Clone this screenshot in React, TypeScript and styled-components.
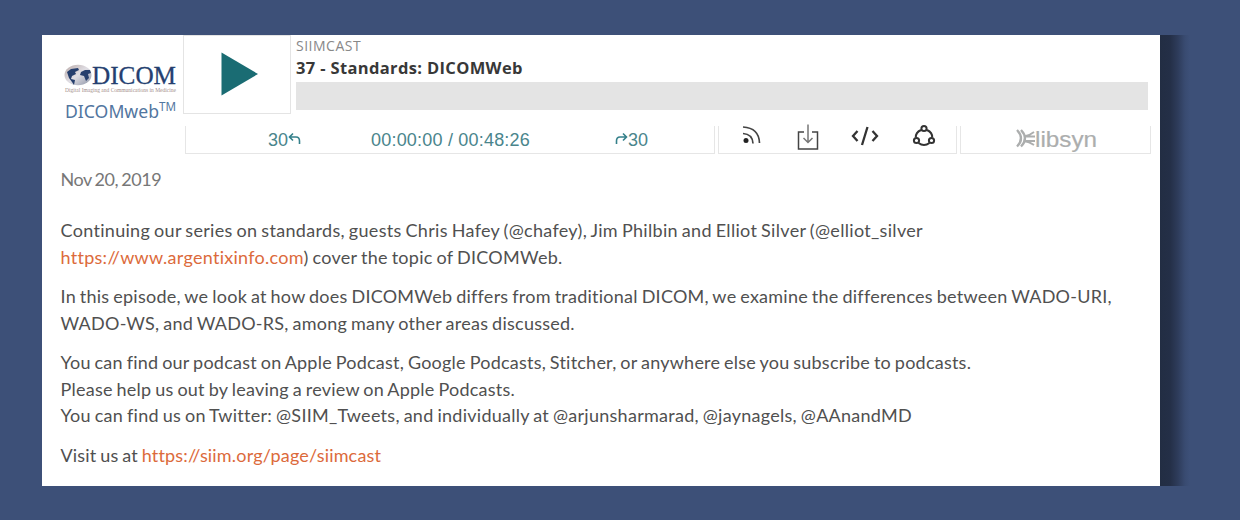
import React from "react";
import styled, { createGlobalStyle } from "styled-components";

interface ITextProps {
  $spacing?: number;
}

interface IPanelProps {
  $width: number;
}

const App: React.FC = () => {
  return (
    <Page>
      <GlobalStyle />
      <Card>
        <Player>
          <Logo />
          <Main>
            <Top>
              <PlayButton aria-label='Play'>
                <svg width='38' height='44' viewBox='0 0 38 44'>
                  <path d='M0.5 0.5L37 22L0.5 43.5Z' fill='#1a6c73' />
                </svg>
              </PlayButton>
              <Info>
                <Show>SIIMCAST</Show>
                <Title>37 - Standards: DICOMWeb</Title>
                <Track />
              </Info>
            </Top>
            <Bottom>
              <Times $width={530}>
                <Skip>
                  30
                  <SkipIcon />
                </Skip>
                <Clock>00:00:00 / 00:48:26</Clock>
                <Skip>
                  <SkipIcon flipped />
                  30
                </Skip>
              </Times>
              <Actions $width={239}>
                <RssIcon />
                <DownloadIcon />
                <EmbedIcon />
                <ShareIcon />
              </Actions>
              <Brand $width={191}>
                <Libsyn />
              </Brand>
            </Bottom>
          </Main>
        </Player>
        <Notes>
          <PostDate>Nov 20, 2019</PostDate>
          <Paragraph>
            <Line $spacing={0.31}>
              Continuing our series on standards, guests Chris Hafey (@chafey), Jim Philbin and Elliot Silver (@elliot_silver
            </Line>
            <Line $spacing={0.28}>
              <Link href='#'>https://www.argentixinfo.com</Link>) cover the topic of DICOMWeb.
            </Line>
          </Paragraph>
          <Paragraph>
            <Line $spacing={0.25}>
              In this episode, we look at how does DICOMWeb differs from traditional DICOM, we examine the differences between WADO-URI,
            </Line>
            <Line $spacing={0.25}>WADO-WS, and WADO-RS, among many other areas discussed.</Line>
          </Paragraph>
          <Paragraph>
            <Line $spacing={0.23}>
              You can find our podcast on Apple Podcast, Google Podcasts, Stitcher, or anywhere else you subscribe to podcasts.
            </Line>
            <Line $spacing={0.24}>Please help us out by leaving a review on Apple Podcasts.</Line>
            <Line $spacing={0.27}>
              You can find us on Twitter: @SIIM_Tweets, and individually at @arjunsharmarad, @jaynagels, @AAnandMD
            </Line>
          </Paragraph>
          <Paragraph>
            <Line $spacing={0.18}>
              Visit us at <Link href='#'>https://siim.org/page/siimcast</Link>
            </Line>
          </Paragraph>
        </Notes>
      </Card>
      <Shade />
    </Page>
  );
};

const Logo: React.FC = () => (
  <LogoBox>
    <svg width='118' height='60' viewBox='0 0 118 60'>
      <defs>
        <linearGradient id='globe' x1='0' y1='0' x2='1' y2='1'>
          <stop offset='0' stopColor='#b9aaa8' />
          <stop offset='0.5' stopColor='#e0dee4' />
          <stop offset='1' stopColor='#8b93a6' />
        </linearGradient>
      </defs>
      <ellipse cx='16' cy='11' rx='13.5' ry='10.2' fill='url(#globe)' />
      <path d='M5 8l4-3 7-1 1 2-4 2 1 2-4 2-1 3 4 1-1 5-2-3-3-4zM19 8l4-2 5 0 1 3-3 1 1 4-3 3-2-5-4-1z' fill='#263f6d' />
      <text x='30' y='20.3' fontFamily='Liberation Serif, serif' fontSize='25.5' fill='#253f70' stroke='#253f70' strokeWidth='0.3' textLength='84' lengthAdjust='spacingAndGlyphs'>
        DICOM
      </text>
      <text x='3' y='28.3' fontFamily='Liberation Serif, serif' fontSize='5.5' fill='#a58f8d' textLength='111' lengthAdjust='spacingAndGlyphs'>
        Digital Imaging and Communications in Medicine
      </text>
      <text x='3' y='54' fontFamily='Noto Sans, sans-serif' fontSize='18.5' fill='#5276a0' textLength='94' lengthAdjust='spacingAndGlyphs'>
        DICOMweb
      </text>
      <text x='97' y='47' fontFamily='Noto Sans, sans-serif' fontSize='12' fill='#5276a0' textLength='17' lengthAdjust='spacingAndGlyphs'>
        TM
      </text>
    </svg>
  </LogoBox>
);

const SkipIcon: React.FC<{ flipped?: boolean }> = ({ flipped }) => (
  <svg width='13' height='14' viewBox='0 0 13 14' fill='none' stroke='#35808a' strokeWidth='1.6'>
    <path d={flipped ? "M1.5 12V9Q1.5 5 5 5H11M8 1.5L11.5 5L8 8.5" : "M11.5 12V9Q11.5 5 8 5H2M5 1.5L1.5 5L5 8.5"} />
  </svg>
);

const RssIcon: React.FC = () => (
  <svg width='20' height='20' viewBox='0 0 20 20' fill='none' stroke='#444' strokeWidth='1.7'>
    <circle cx='4' cy='14.5' r='2.5' fill='#222' stroke='none' />
    <path d='M1 7.5Q10.5 8 11 17.5M1 1Q17 2 17.5 17' />
  </svg>
);

const DownloadIcon: React.FC = () => (
  <svg width='22' height='28' viewBox='0 0 22 28' fill='none' strokeWidth='1.5'>
    <path d='M7 9H1.5V26H20.5V9H15' stroke='#444' />
    <path d='M11 1.5V19.5M6.5 15L11 19.5L15.5 15' stroke='#777' />
  </svg>
);

const EmbedIcon: React.FC = () => (
  <svg width='28' height='20' viewBox='0 0 28 20' fill='none' stroke='#333' strokeWidth='2.3'>
    <path d='M6.5 5L2 10L6.5 15M21.5 5L26 10L21.5 15M16.5 1L11 19' />
  </svg>
);

const ShareIcon: React.FC = () => (
  <svg width='24' height='24' viewBox='0 0 24 24' fill='none' stroke='#333' strokeWidth='2'>
    <circle cx='12' cy='4.5' r='2.6' />
    <circle cx='4.5' cy='16.5' r='2.6' />
    <circle cx='19.5' cy='16.5' r='2.6' />
    <path d='M9 6Q3.5 8.5 3.8 13.5M15 6Q20.5 8.5 20.2 13.5M6.5 19Q12 23 17.5 19' />
  </svg>
);

const Libsyn: React.FC = () => (
  <svg width='84' height='28' viewBox='0 0 84 28'>
    <g fill='none' stroke='#acaeae' strokeWidth='2.3'>
      <path d='M1 3Q9 11.5 1 19.5M5 3Q13 11.5 5 19.5' />
      <path d='M18 5Q13 9 8 9.5M19 9.5H8M19 14H8M18 18Q13 14.5 8 14' strokeWidth='1.8' />
    </g>
    <text x='19' y='19.5' fontFamily='Liberation Sans, sans-serif' fontSize='22' fill='#acaeae' stroke='#acaeae' strokeWidth='0.2' textLength='62' lengthAdjust='spacingAndGlyphs'>
      libsyn
    </text>
  </svg>
);

const GlobalStyle = createGlobalStyle`
  * {
    box-sizing: border-box;
  }
  body {
    margin: 0;
    background-color: #3d5078;
  }
  svg {
    display: block;
    flex: none;
    overflow: visible;
  }
`;
const Page = styled.div`
  display: flex;
  width: 1240px;
  height: 520px;
  padding: 35px 0 34px 42px;
  overflow: hidden;
  background-color: #3d5078;
`;
const Card = styled.main`
  display: flex;
  flex-direction: column;
  width: 1118px;
  height: 451px;
  background-color: #fff;
`;
const Shade = styled.div`
  width: 30px;
  height: 451px;
  background: linear-gradient(to right, #222d43 0, #242f47 10px, #2e3c5b 18px, #394b71 25px, #3d5078 30px);
`;
const Player = styled.section`
  display: flex;
  height: 120px;
`;
const LogoBox = styled.div`
  width: 141px;
  padding: 29px 0 0 20px;
`;
const Main = styled.div`
  display: flex;
  flex-direction: column;
  width: 970px;
`;
const Top = styled.div`
  display: flex;
  height: 79px;
`;
const PlayButton = styled.button`
  display: flex;
  align-items: flex-start;
  width: 108px;
  height: 79px;
  padding: 16px 0 0 37px;
  border: 1px solid #e4e4e4;
  background-color: #fff;
`;
const Info = styled.div`
  display: flex;
  flex-direction: column;
  width: 857px;
  padding: 1px 0 0 5px;
  font-family: "Open Sans", sans-serif;
`;
const Show = styled.span`
  height: 20px;
  font-size: 14px;
  line-height: 20px;
  letter-spacing: 0.5px;
  color: #888;
`;
const Title = styled.strong`
  height: 26px;
  font-size: 16.5px;
  line-height: 24px;
  letter-spacing: 0.35px;
  color: #383838;
`;
const Track = styled.div`
  width: 852px;
  height: 28px;
  background-color: #e4e4e4;
`;
const Bottom = styled.div`
  display: flex;
  gap: 3px;
  margin-top: 12px;
  padding-left: 2px;
`;
const Panel = styled.div<IPanelProps>`
  display: flex;
  flex: none;
  width: ${({ $width }) => $width}px;
  height: 28px;
  border: 1px solid #e6e6e6;
  border-top: none;
`;
const Times = styled(Panel)`
  padding-left: 82px;
  font-family: "Liberation Sans", sans-serif;
  font-size: 18px;
  line-height: 28px;
  color: #4a858c;
`;
const Skip = styled.span`
  display: flex;
  svg {
    margin-top: 6px;
  }
`;
const Clock = styled.span`
  width: 244px;
  margin-left: 70px;
  letter-spacing: 0.2px;
`;
const Actions = styled(Panel)`
  align-items: center;
  justify-content: space-between;
  padding: 0 20px 7px 23px;
  svg:nth-child(2) {
    margin: 2px -2px 0 2px;
  }
`;
const Brand = styled(Panel)`
  padding: 1px 0 0 55px;
`;
const Notes = styled.article`
  padding: 11px 0 0 18.5px;
  font-family: Lato, sans-serif;
  font-size: 18px;
  color: #505050;
`;
const PostDate = styled.time`
  display: block;
  margin-bottom: 25px;
  line-height: 26.4px;
  letter-spacing: -0.5px;
  word-spacing: -0.8px;
  color: #777;
`;
const Paragraph = styled.p`
  margin: 0 0 13.4px;
`;
const Line = styled.span<ITextProps>`
  display: block;
  line-height: 26.3px;
  white-space: nowrap;
  letter-spacing: ${({ $spacing = 0 }) => $spacing}px;
  word-spacing: -1px;
`;
const Link = styled.a`
  color: #dc6a3b;
  text-decoration: none;
`;

export default App;
